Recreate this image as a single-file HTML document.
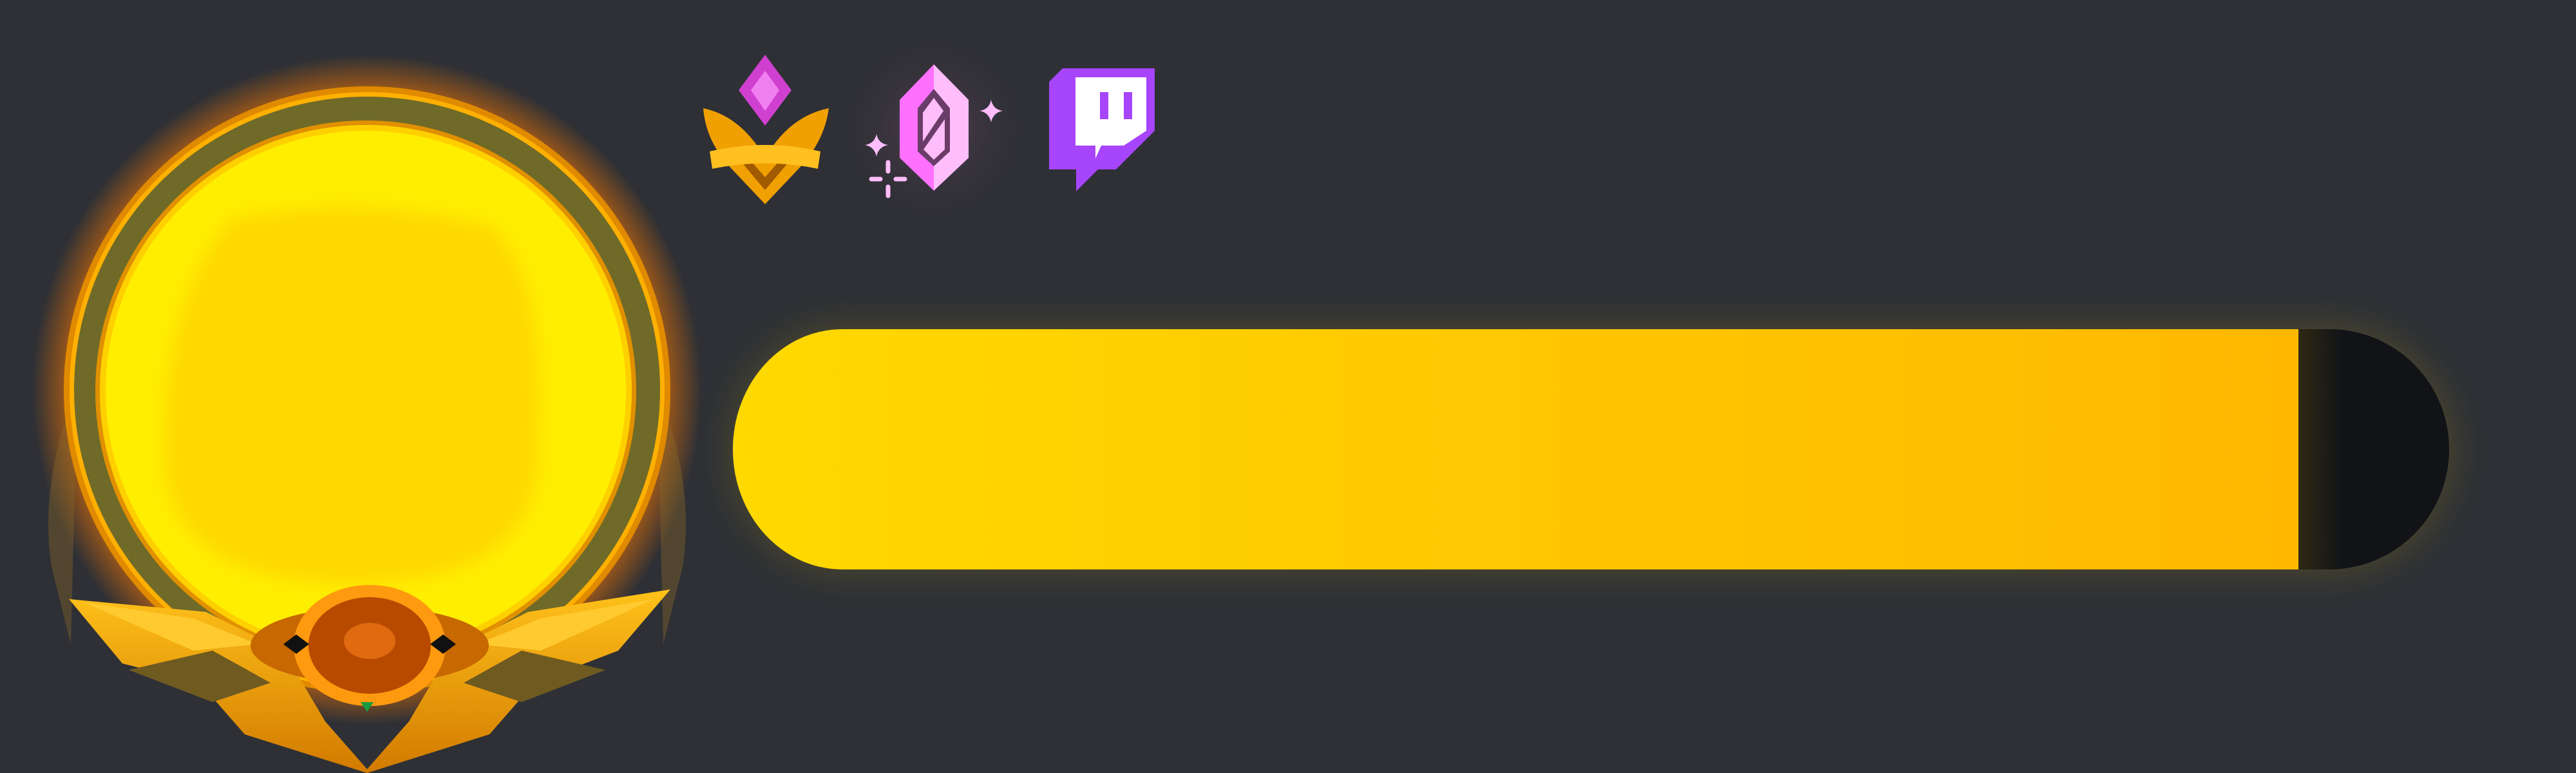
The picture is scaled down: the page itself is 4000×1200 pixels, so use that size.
<!DOCTYPE html>
<html><head><meta charset="utf-8"><style>
html,body{margin:0;padding:0;background:#2e3035;width:4000px;height:1200px;overflow:hidden;position:relative}
.bar{position:absolute;left:1138px;top:511px;width:2665px;height:373px;border-radius:170px 186px 186px 170px / 186px;background:#111317;box-shadow:0 0 60px rgba(255,210,0,.18);overflow:hidden}
.fill{position:absolute;left:0;top:0;width:2431px;height:373px;background:linear-gradient(90deg,#ffd900,#ffc400 60%,#ffb800);}
.shade{position:absolute;left:2431px;top:0;width:70px;height:373px;background:linear-gradient(90deg,#2e2814,#111317)}
svg{position:absolute;left:0;top:0}
</style></head><body>
<div class="bar"><div class="fill"></div><div class="shade"></div></div>
<svg width="4000" height="1200" viewBox="0 0 4000 1200">
<defs>
<radialGradient id="glow" cx="570" cy="605" r="520" gradientUnits="userSpaceOnUse">
<stop offset="0.88" stop-color="#ff7a00" stop-opacity="0.6"/><stop offset="1" stop-color="#ff7a00" stop-opacity="0"/></radialGradient>
<filter id="bl" x="-20%" y="-20%" width="140%" height="140%"><feGaussianBlur stdDeviation="14"/></filter>
<linearGradient id="gold" x1="0" y1="0" x2="0" y2="1"><stop offset="0" stop-color="#ffc21a"/><stop offset="1" stop-color="#d27a00"/></linearGradient>
<radialGradient id="pglow" cx="1450" cy="200" r="160" gradientUnits="userSpaceOnUse"><stop offset="0" stop-color="#7a4a70" stop-opacity=".5"/><stop offset="1" stop-color="#2e3035" stop-opacity="0"/></radialGradient>
</defs>
<!-- frame -->
<circle cx="570" cy="605" r="520" fill="url(#glow)"/>
<path d="M80 880 Q60 750 120 600 L110 1000Z M1060 880 Q1080 750 1020 600 L1030 1000Z" fill="#8a6a2a" opacity=".4"/>
<circle cx="570" cy="605" r="471" fill="#e08a00"/>
<circle cx="570" cy="605" r="462" fill="#ffb000"/>
<circle cx="570" cy="605" r="455" fill="#6f6a28"/>
<circle cx="568" cy="607" r="420" fill="#e09000"/>
<circle cx="568" cy="607" r="413" fill="#ffd000"/>
<circle cx="568" cy="607" r="404" fill="#ffee00"/>
<path d="M360 340 Q560 300 760 350 Q850 420 835 700 Q840 900 560 905 Q270 910 255 720 Q250 460 360 340Z" fill="#ffd800" filter="url(#bl)"/>
<!-- bottom ornament -->
<path d="M107 930 L320 950 L440 1010 L505 1120 L570 1194 L635 1120 L700 1010 L820 950 L1041 915 L960 1010 L830 1060 L760 1140 L570 1200 L380 1140 L310 1060 L190 1030Z" fill="url(#gold)"/>
<path d="M200 1040 L330 1010 L420 1060 L330 1090Z M940 1040 L810 1010 L720 1060 L810 1090Z" fill="#6f5a20"/>
<path d="M130 935 L300 960 L400 1000 L300 1010 Z M1015 930 L840 960 L740 1000 L840 1010Z" fill="#ffca30"/>
<ellipse cx="574" cy="1002" rx="185" ry="60" fill="#c86800"/>
<ellipse cx="574" cy="1002" rx="118" ry="94" fill="#ff9a10"/>
<ellipse cx="574" cy="1002" rx="95" ry="75" fill="#b84a00"/>
<ellipse cx="574" cy="995" rx="40" ry="28" fill="#e06a10"/>
<path d="M440 1000 L460 985 L480 1000 L460 1015Z M668 1000 L688 985 L708 1000 L688 1015Z" fill="#111"/>
<path d="M560 1090 L580 1090 L570 1105Z" fill="#1a9a40"/>
<!-- rank icon -->
<path d="M1188 85 L1229 140 L1188 195 L1147 140Z" fill="#d040d0"/>
<path d="M1188 110 L1210 140 L1188 172 L1166 140Z" fill="#f080f0"/>
<path d="M1092 168 Q1150 180 1188 245 Q1226 180 1287 168 Q1280 220 1240 262 L1188 317 L1136 262 Q1096 220 1092 168Z" fill="#f0a000"/>
<path d="M1150 250 L1188 295 L1226 250 L1210 250 L1188 275 L1166 250Z" fill="#a05a00"/>
<path d="M1102 235 Q1188 215 1274 235 L1270 262 Q1188 245 1106 262Z" fill="#ffc020"/>
<!-- crystal icon -->
<circle cx="1450" cy="200" r="160" fill="url(#pglow)"/>
<path d="M1450 100 L1504 155 L1504 245 L1450 296 L1397 245 L1397 155Z" fill="#ff70ff"/>
<path d="M1450 100 L1504 155 L1504 245 L1450 296Z" fill="#ffbdfb"/>
<path d="M1450 138 L1475 168 L1475 235 L1450 258 L1425 235 L1425 168Z" fill="#6a3c68"/>
<path d="M1450 152 L1465 172 L1433 220 L1433 175Z M1467 185 L1467 232 L1450 248 L1434 232Z" fill="#ffbdfb"/>
<path d="M1539 155 Q1542 170 1557 172 Q1542 175 1539 190 Q1536 175 1521 172 Q1536 170 1539 155Z M1361 208 Q1364 223 1379 225 Q1364 228 1361 243 Q1358 228 1343 225 Q1358 223 1361 208Z" fill="#ffbdfb"/>
<path d="M1379 252 V266 M1379 290 V304 M1353 278 H1367 M1391 278 H1405" stroke="#ffbdfb" stroke-width="7" stroke-linecap="round"/>
<!-- twitch -->
<path d="M1650 106 L1793 106 L1793 203 L1733 263 L1705 263 L1671 297 L1671 263 L1629 263 L1629 127Z" fill="#a645fb"/>
<path d="M1670 120 L1780 120 L1780 203 L1745 226 L1710 226 L1701 246 L1701 226 L1670 226Z" fill="#fff"/>
<rect x="1708" y="143" width="13" height="42" fill="#a645fb"/>
<rect x="1745" y="143" width="13" height="42" fill="#a645fb"/>
</svg>
</body></html>
